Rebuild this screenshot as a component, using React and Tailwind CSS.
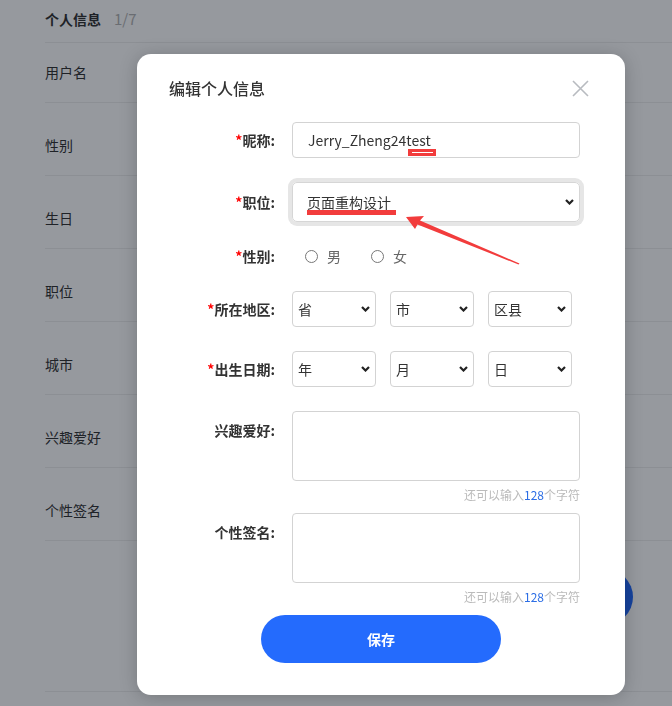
import React from 'react'

const rows = ['用户名', '性别', '生日', '职位', '城市', '兴趣爱好', '个性签名']

function Label({ req, top, children }) {
  return (
    <div className={`w-[106px] shrink-0 text-right text-[14px] leading-5 font-bold text-[#333] ${top ? 'pt-[9px]' : ''}`}>
      {req && <span className="text-[#ff0000]">*</span>}
      {children}:
    </div>
  )
}

function Chevron() {
  return (
    <svg className="pointer-events-none absolute right-[6px] top-1/2 -translate-y-1/2 w-[9px] h-[6px]" viewBox="0 0 9 6" fill="none">
      <path d="M1 1l3.5 3.5L8 1" stroke="#222" strokeWidth="2.2" />
    </svg>
  )
}

function SmallSelect({ text }) {
  return (
    <div className="relative w-[84px] h-[36px]">
      <select className="w-full h-full appearance-none rounded-[4px] border border-[#d3d3d3] bg-white pl-[5px] text-[14px] text-[#333] outline-none">
        <option>{text}</option>
      </select>
      <Chevron />
    </div>
  )
}

function Counter() {
  return (
    <div className="mt-[6px] text-right text-[12px] leading-4 text-[#bbbbbb]">
      还可以输入<span className="text-[#2b6de5]">128</span>个字符
    </div>
  )
}

function Radio({ label }) {
  return (
    <label className="flex items-center gap-[9px] text-[14px] leading-5 text-[#666]">
      <span className="w-[13px] h-[13px] rounded-full border border-[#777] bg-white" />
      {label}
    </label>
  )
}

export default function App() {
  return (
    <div className="relative min-h-screen bg-white font-['Noto_Sans_CJK_SC',sans-serif] overflow-hidden">
      {/* page behind the dialog */}
      <div className="pl-[45px]">
        <div className="h-[43px] pt-[9px] flex items-start gap-[13px] border-b border-[#eeeeee] leading-5">
          <span className="text-[14px] font-bold text-[#333]">个人信息</span>
          <span className="text-[15px] text-[#b3b3b3]">1/7</span>
        </div>
        {rows.map((r, i) => (
          <div key={r} className={`${i === 0 ? 'h-[60px]' : 'h-[73px]'} flex items-end pb-[22px] border-b border-[#eeeeee]`}>
            <span className="text-[14px] leading-4 text-[#333]">{r}</span>
          </div>
        ))}
        <div className="h-[151px] border-b border-[#eeeeee]" />
      </div>
      <div className="absolute left-[577px] top-[569px] w-[56px] h-[56px] rounded-full bg-[#246bfd]" />

      {/* overlay */}
      <div className="fixed inset-0 bg-[rgba(5,12,24,0.42)]">
        <div className="absolute left-[137px] top-[54px] w-[488px] rounded-[14px] bg-white pt-[22px] pb-[32px] pl-[32px] pr-[45px] shadow-[0_2px_18px_rgba(0,0,0,0.22)]">
          <div className="h-[24px] flex items-center justify-between mr-[-9px]">
            <h2 className="text-[16px] leading-6 font-medium text-[#333]">编辑个人信息</h2>
            <svg className="w-[17px] h-[17px]" viewBox="0 0 17 17" fill="none">
              <path d="M1 1l15 15M16 1L1 16" stroke="#b8bbc0" strokeWidth="1.6" />
            </svg>
          </div>

          <div className="mt-[22px] flex items-center">
            <Label req>昵称</Label>
            <input
              readOnly
              defaultValue="Jerry_Zheng24test"
              className="ml-[17px] w-[288px] h-[36px] rounded-[4px] border border-[#d3d3d3] pl-[15px] text-[14px] text-[#333] outline-none"
            />
          </div>

          <div className="mt-[24px] flex items-center">
            <Label req>职位</Label>
            <div className="relative ml-[17px] w-[288px] h-[40px] rounded-[5px] shadow-[0_0_0_4px_#e6e6e6]">
              <select className="w-full h-full appearance-none rounded-[5px] border border-[#d6d6d6] bg-white pl-[14px] text-[14px] text-[#333] outline-none">
                <option>页面重构设计</option>
              </select>
              <Chevron />
            </div>
          </div>

          <div className="mt-[24px] h-[20px] flex items-center">
            <Label req>性别</Label>
            <div className="ml-[30px] flex items-center gap-[30px]">
              <Radio label="男" />
              <Radio label="女" />
            </div>
          </div>

          <div className="mt-[25px] flex items-center">
            <Label req>所在地区</Label>
            <div className="ml-[17px] flex gap-[14px]">
              <SmallSelect text="省" />
              <SmallSelect text="市" />
              <SmallSelect text="区县" />
            </div>
          </div>

          <div className="mt-[24px] flex items-center">
            <Label req>出生日期</Label>
            <div className="ml-[17px] flex gap-[14px]">
              <SmallSelect text="年" />
              <SmallSelect text="月" />
              <SmallSelect text="日" />
            </div>
          </div>

          <div className="mt-[24px] flex items-start">
            <Label top>兴趣爱好</Label>
            <textarea className="ml-[17px] w-[288px] h-[70px] resize-none rounded-[4px] border border-[#d3d3d3] outline-none" />
          </div>
          <Counter />

          <div className="mt-[10px] flex items-start">
            <Label top>个性签名</Label>
            <textarea className="ml-[17px] w-[288px] h-[70px] resize-none rounded-[4px] border border-[#d3d3d3] outline-none" />
          </div>
          <Counter />

          <div className="mt-[10px] flex justify-center">
            <button className="ml-[13px] w-[240px] h-[48px] rounded-full bg-[#246bfd] text-[14px] font-semibold text-white">
              保存
            </button>
          </div>
        </div>

        {/* red annotation marks */}
        <svg className="pointer-events-none absolute inset-0 w-[672px] h-[706px]" viewBox="0 0 672 706">
          <rect x="408" y="149" width="28" height="7" fill="#f23c3c" />
          <rect x="412" y="152" width="21" height="1" fill="#fff" />
          <rect x="307" y="210" width="89" height="5" fill="#f23c3c" />
          <polygon points="406,217 424,216 420,220.5 519.5,263.5 518.5,264.5 417.5,224.5 415,229" fill="#f23c3c" />
        </svg>
      </div>
    </div>
  )
}
